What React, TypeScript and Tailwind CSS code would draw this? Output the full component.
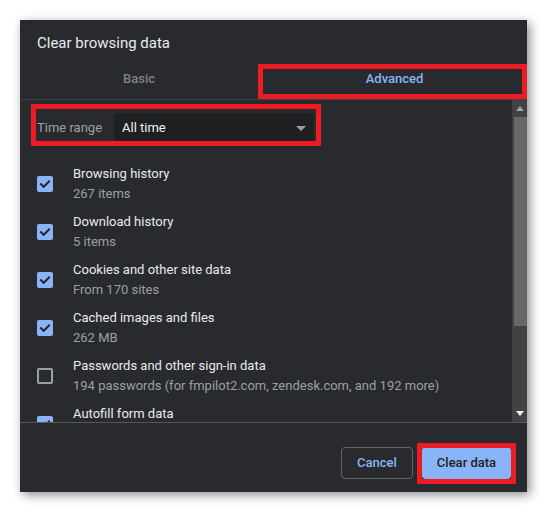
import React from "react";

type Item = { label: string; sub?: string; checked: boolean };

const items: Item[] = [
  { label: "Browsing history", sub: "267 items", checked: true },
  { label: "Download history", sub: "5 items", checked: true },
  { label: "Cookies and other site data", sub: "From 170 sites", checked: true },
  { label: "Cached images and files", sub: "262 MB", checked: true },
  {
    label: "Passwords and other sign-in data",
    sub: "194 passwords (for fmpilot2.com, zendesk.com, and 192 more)",
    checked: false,
  },
  { label: "Autofill form data", checked: true },
];

function Checkbox({ checked }: { checked: boolean }) {
  if (!checked) {
    return <div className="h-[16px] w-[16px] shrink-0 rounded-[2px] border-2 border-[#9aa0a6]" />;
  }
  return (
    <div className="flex h-[16px] w-[16px] shrink-0 items-center justify-center rounded-[2px] bg-[#8ab4f8]">
      <svg width="12" height="12" viewBox="0 0 12 12" fill="none">
        <path d="M2 6.2 L4.7 8.8 L10 3.4" stroke="#202124" strokeWidth="1.9" strokeLinecap="square" />
      </svg>
    </div>
  );
}

export default function App() {
  return (
    <div className="min-h-[512px] w-[547px] bg-white p-[20px] font-['Roboto',sans-serif]">
      <div className="relative flex h-[472px] w-[507px] flex-col bg-[#292a2d] shadow-[3px_3px_10px_rgba(0,0,0,0.45)]">
        <div className="h-[44px] pl-[17px] pt-[13px] text-[15px] leading-[20px] text-[#e8eaed]">
          Clear browsing data
        </div>
        <div className="flex h-[36px] border-b border-[#3f4043] text-[13px] font-medium leading-[16px]">
          <div className="w-[238px] pt-[7px] text-center text-[#7f8286]">Basic</div>
          <div className="flex-1 pl-[4px] pt-[7px] text-center text-[#8ab4f8]">Advanced</div>
        </div>
        <div className="flex h-[322px] overflow-hidden">
          <div className="flex-1 pl-[17px]">
            <div className="mt-[13px] flex h-[30px] items-center">
              <div className="w-[77px] text-[13px] leading-[20px] text-[#9aa0a6]">Time range</div>
              <div className="flex h-[30px] w-[200px] items-center justify-between rounded-[4px] bg-[#1e1f21] pl-[8px] pr-[8px]">
                <span className="text-[13px] leading-[20px] text-[#f1f3f4]">All time</span>
                <svg width="10" height="5" viewBox="0 0 10 5">
                  <path d="M0 0 L10 0 L5 5 Z" fill="#9aa0a6" />
                </svg>
              </div>
            </div>
            <div className="mt-[17px] flex flex-col">
              {items.map((it) => (
                <div key={it.label} className="flex h-[48px] shrink-0 items-center">
                  <Checkbox checked={it.checked} />
                  <div className="ml-[20px] flex h-[40px] flex-col text-[13px] leading-[20px]">
                    <span className="whitespace-nowrap text-[#e8eaed]">{it.label}</span>
                    {it.sub && <span className="whitespace-nowrap text-[#9aa0a6]">{it.sub}</span>}
                  </div>
                </div>
              ))}
            </div>
          </div>
          <div className="flex w-[15px] flex-col bg-[#424242]">
            <div className="flex h-[17px] items-center justify-center">
              <svg width="8" height="5" viewBox="0 0 8 5">
                <path d="M0 5 L8 5 L4 0 Z" fill="#a3a3a3" />
              </svg>
            </div>
            <div className="ml-[2px] h-[209px] bg-[#686868]" />
            <div className="flex-1" />
            <div className="flex h-[17px] items-center justify-center">
              <svg width="8" height="5" viewBox="0 0 8 5">
                <path d="M0 0 L8 0 L4 5 Z" fill="#f2f2f2" />
              </svg>
            </div>
          </div>
        </div>
        <div className="flex flex-1 items-start justify-end gap-[9px] border-t border-[#55575b] pr-[16px] pt-[24px]">
          <button className="h-[32px] w-[72px] rounded-[4px] border border-[#5f6368] text-[13px] font-medium text-[#8ab4f8]">
            Cancel
          </button>
          <button className="h-[32px] w-[89px] rounded-[4px] bg-[#8ab4f8] text-[13px] font-medium text-[#202124]">
            Clear data
          </button>
        </div>

        <div className="absolute left-[238px] top-[44px] h-[35px] w-[269px] border-[5px] border-[#ed1c24]" />
        <div className="absolute left-[11px] top-[84px] h-[42px] w-[290px] border-[5px] border-[#ed1c24]" />
        <div className="absolute left-[397px] top-[423px] h-[41px] w-[99px] border-[5px] border-[#ed1c24]" />
      </div>
    </div>
  );
}
